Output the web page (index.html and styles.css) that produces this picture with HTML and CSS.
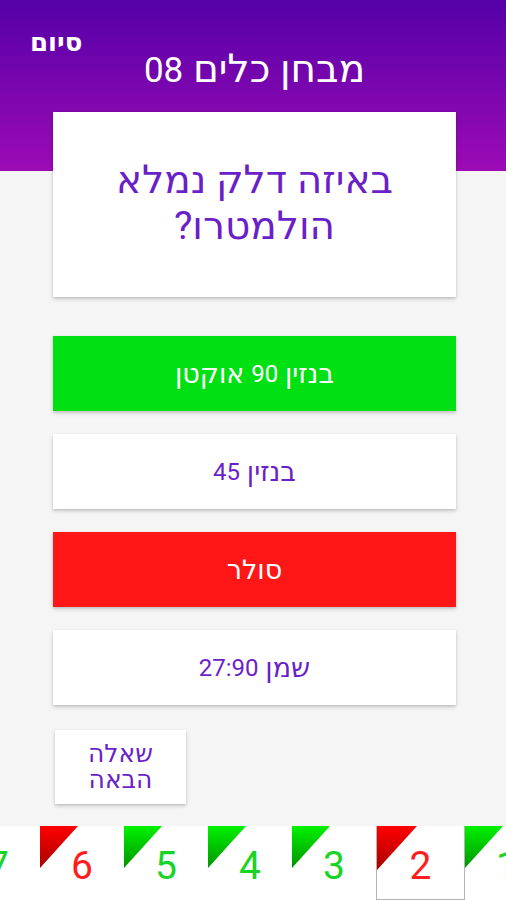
FILE: index.html
```html
<!DOCTYPE html>
<html lang="he" dir="rtl">
<head>
<meta charset="utf-8">
<title>מבחן כלים 08</title>
<link rel="stylesheet" href="styles.css">
</head>
<body>
<div class="screen">
  <main class="main">
    <header class="header">
      <h1 class="title">מבחן כלים <span class="num">08</span></h1>
      <button class="finish">סיום</button>
    </header>
    <section class="question-card">
      <p class="question">באיזה דלק נמלא הולמטרו?</p>
    </section>
    <div class="answers">
      <div class="answer answer-correct">בנזין <span class="num">90</span> אוקטן</div>
      <div class="answer">בנזין <span class="num">45</span></div>
      <div class="answer answer-wrong">סולר</div>
      <div class="answer">שמן <span class="num">27:90</span></div>
    </div>
    <button class="next">שאלה<br>הבאה</button>
  </main>
  <nav class="strip">
    <div class="strip-list">
      <div class="qnum ok">1</div>
      <div class="qnum bad current">2</div>
      <div class="qnum ok">3</div>
      <div class="qnum ok">4</div>
      <div class="qnum ok">5</div>
      <div class="qnum bad">6</div>
      <div class="qnum ok">7</div>
    </div>
  </nav>
</div>
</body>
</html>
```
FILE: styles.css
```css
html, body {
  margin: 0;
  padding: 0;
}
body {
  width: 506px;
  height: 900px;
  overflow: hidden;
  font-family: Roboto, "DejaVu Sans", sans-serif;
  background: #f5f5f5;
}
.screen {
  height: 900px;
  display: flex;
  flex-direction: column;
}
.main {
  flex: 1;
  display: flex;
  flex-direction: column;
  padding: 28px 50px 0 53px;
  background: linear-gradient(180deg, #5500a8 0px, #9c0bb4 171px, #f5f5f5 171px);
}
.header {
  display: grid;
}
.title, .finish {
  grid-area: 1 / 1;
}
.title {
  margin: 21px 0 0;
  justify-self: center;
  font-size: 39px;
  line-height: 40px;
  font-weight: 400;
  color: #ffffff;
}
.title .num {
  font-size: 35px;
}
.finish {
  justify-self: end;
  align-self: start;
  margin: 0 0 0 -23px;
  padding: 0;
  border: 0;
  background: none;
  font-family: inherit;
  font-size: 26px;
  line-height: 28px;
  font-weight: 700;
  color: #ffffff;
}
.question-card {
  margin-top: 21px;
  height: 185px;
  background: #ffffff;
  display: flex;
  align-items: center;
  justify-content: center;
  box-shadow: 0 2px 4px rgba(0,0,0,0.18), 0 1px 2px rgba(0,0,0,0.08);
}
.question {
  margin: 0 0 4px;
  padding: 0 30px;
  text-align: center;
  font-size: 39px;
  line-height: 46px;
  color: #6a1fc9;
}
.answers {
  margin-top: 39px;
  display: flex;
  flex-direction: column;
  gap: 23px;
}
.answer {
  height: 75px;
  display: flex;
  align-items: center;
  justify-content: center;
  gap: 0.25em;
  background: #ffffff;
  font-size: 27px;
  color: #6a1fc9;
  box-shadow: 0 2px 4px rgba(0,0,0,0.18), 0 1px 2px rgba(0,0,0,0.08);
}
.answer .num {
  font-size: 24px;
}
.answer-correct {
  background: #00e013;
  color: #ffffff;
}
.answer-wrong {
  background: #ff1717;
  color: #ffffff;
}
.next {
  align-self: flex-end;
  margin: 25px 0 0 2px;
  width: 131px;
  height: 74px;
  border: 0;
  padding: 0;
  background: #ffffff;
  font-family: inherit;
  font-size: 25px;
  line-height: 26px;
  color: #6a1fc9;
  box-shadow: 0 2px 4px rgba(0,0,0,0.18), 0 1px 2px rgba(0,0,0,0.08);
}
.strip {
  height: 74px;
  background: #ffffff;
  overflow: hidden;
}
.strip-list {
  display: flex;
  margin-right: -43px;
  height: 74px;
}
.qnum {
  position: relative;
  flex: 0 0 84px;
  height: 74px;
  box-sizing: border-box;
  display: flex;
  align-items: center;
  justify-content: center;
  padding-top: 6px;
  font-family: Roboto, sans-serif;
  font-size: 39px;
}
.qnum::before {
  content: "";
  position: absolute;
  top: 0;
  left: 0;
  width: 38px;
  height: 42px;
  clip-path: polygon(0 0, 100% 0, 0 100%);
}
.ok { color: #18d424; }
.ok::before { background: linear-gradient(180deg, #00f200, #009400); }
.bad { color: #ff1c1c; }
.bad::before { background: linear-gradient(180deg, #ff0000, #a80000); }
.current {
  flex-basis: 89px;
  border: 1px solid #b4b4b4;
  border-top: 0;
}
.current::before {
  width: 40px;
  height: 44px;
}
```
